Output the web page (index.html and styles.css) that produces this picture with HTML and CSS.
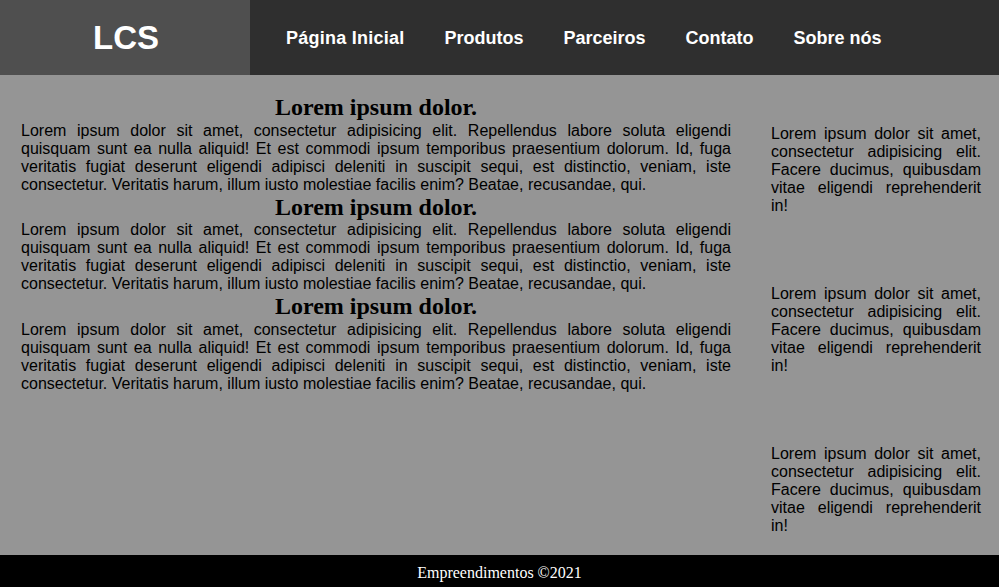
FILE: index.html
```html
<!DOCTYPE html>
<html lang="pt-BR">
<head>
<meta charset="utf-8">
<title>LCS</title>
<link rel="stylesheet" href="styles.css">
</head>
<body>
<div class="page">
  <header class="topbar">
    <div class="brand">LCS</div>
    <nav class="menu">
      <ul class="menu-list">
        <li class="menu-item menu-item-first">Página Inicial</li>
        <li class="menu-item">Produtos</li>
        <li class="menu-item">Parceiros</li>
        <li class="menu-item">Contato</li>
        <li class="menu-item">Sobre nós</li>
      </ul>
    </nav>
  </header>
  <main class="content">
    <section class="articles">
      <article class="article">
        <h2 class="article-title">Lorem ipsum dolor.</h2>
        <p class="article-text">Lorem ipsum dolor sit amet, consectetur adipisicing elit. Repellendus labore soluta eligendi quisquam sunt ea nulla aliquid! Et est commodi ipsum temporibus praesentium dolorum. Id, fuga veritatis fugiat deserunt eligendi adipisci deleniti in suscipit sequi, est distinctio, veniam, iste consectetur. Veritatis harum, illum iusto molestiae facilis enim? Beatae, recusandae, qui.</p>
      </article>
      <article class="article">
        <h2 class="article-title">Lorem ipsum dolor.</h2>
        <p class="article-text">Lorem ipsum dolor sit amet, consectetur adipisicing elit. Repellendus labore soluta eligendi quisquam sunt ea nulla aliquid! Et est commodi ipsum temporibus praesentium dolorum. Id, fuga veritatis fugiat deserunt eligendi adipisci deleniti in suscipit sequi, est distinctio, veniam, iste consectetur. Veritatis harum, illum iusto molestiae facilis enim? Beatae, recusandae, qui.</p>
      </article>
      <article class="article">
        <h2 class="article-title">Lorem ipsum dolor.</h2>
        <p class="article-text">Lorem ipsum dolor sit amet, consectetur adipisicing elit. Repellendus labore soluta eligendi quisquam sunt ea nulla aliquid! Et est commodi ipsum temporibus praesentium dolorum. Id, fuga veritatis fugiat deserunt eligendi adipisci deleniti in suscipit sequi, est distinctio, veniam, iste consectetur. Veritatis harum, illum iusto molestiae facilis enim? Beatae, recusandae, qui.</p>
      </article>
    </section>
    <aside class="sidebar">
      <p class="side-text">Lorem ipsum dolor sit amet, consectetur adipisicing elit. Facere ducimus, quibusdam vitae eligendi reprehenderit in!</p>
      <p class="side-text">Lorem ipsum dolor sit amet, consectetur adipisicing elit. Facere ducimus, quibusdam vitae eligendi reprehenderit in!</p>
      <p class="side-text">Lorem ipsum dolor sit amet, consectetur adipisicing elit. Facere ducimus, quibusdam vitae eligendi reprehenderit in!</p>
    </aside>
  </main>
  <footer class="footer">Empreendimentos ©2021</footer>
</div>
</body>
</html>
```

FILE: styles.css
```css
* {
  box-sizing: border-box;
}

html,
body {
  margin: 0;
  padding: 0;
}

body {
  background: #959595;
  font-family: "Liberation Sans", Arial, sans-serif;
}

.page {
  display: flex;
  flex-direction: column;
  height: 587px;
}

.topbar {
  display: flex;
  height: 75px;
  background: #2f2f2f;
  flex-shrink: 0;
}

.brand {
  width: 250px;
  background: #4f4f4f;
  color: #fff;
  font-family: "Liberation Sans", Arial, sans-serif;
  font-weight: bold;
  font-size: 33px;
  display: flex;
  align-items: center;
  justify-content: center;
  padding-left: 2px;
}

.menu {
  display: flex;
  align-items: center;
}

.menu-list {
  list-style: none;
  margin: 0;
  padding: 0 0 0 16px;
  display: flex;
}

.menu-item {
  color: #fff;
  font-weight: bold;
  font-size: 18px;
  padding: 2px 20px 0;
}

.menu-item-first {
  letter-spacing: 0.25px;
}

.content {
  flex: 1;
  display: grid;
  grid-template-columns: 710px 210px;
  column-gap: 40px;
  padding: 19px 18px 0 21px;
  background: #959595;
}

.articles {
  display: flex;
  flex-direction: column;
}

.article-title {
  margin: 0;
  font-family: "Liberation Serif", "Times New Roman", serif;
  font-size: 24px;
  font-weight: bold;
  text-align: center;
  color: #000;
  line-height: 27.5px;
}

.article-text {
  margin: 0;
  font-size: 16px;
  line-height: 18px;
  text-align: justify;
  color: #000;
}

.sidebar {
  display: flex;
  flex-direction: column;
  gap: 70px;
  padding-top: 31px;
}

.side-text {
  margin: 0;
  font-size: 16px;
  line-height: 18px;
  text-align: justify;
  color: #000;
}

.footer {
  height: 32px;
  flex-shrink: 0;
  background: #000;
  color: #fff;
  font-family: "Liberation Serif", "Times New Roman", serif;
  font-size: 16px;
  display: flex;
  align-items: center;
  justify-content: center;
  padding-top: 4px;
}
```
